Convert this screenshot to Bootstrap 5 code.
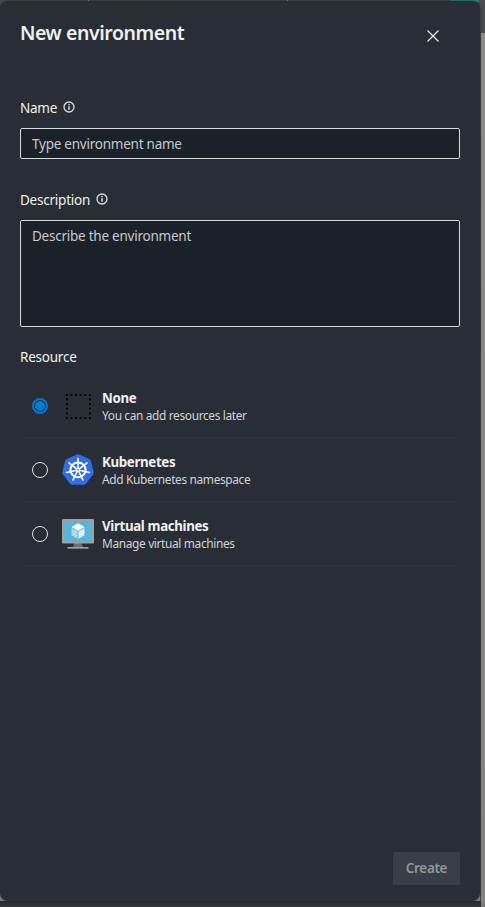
<!DOCTYPE html>
<html lang="en">
<head>
<meta charset="utf-8">
<meta name="viewport" content="width=device-width, initial-scale=1">
<title>New environment</title>
<link href="https://cdn.jsdelivr.net/npm/bootstrap@5.3.0/dist/css/bootstrap.min.css" rel="stylesheet">
<style>
body{font-family:"Segoe UI","Noto Sans",sans-serif;font-size:13.5px;line-height:20px;letter-spacing:-.23px;color:#f0f0f0;height:907px;overflow:hidden;
background:linear-gradient(90deg,transparent 88px,#888b8d 88px,#888b8d 89px,transparent 89px,transparent 287px,#888b8d 287px,#888b8d 288px,transparent 288px,transparent 450px,#2b8276 450px,#2b8276 479px,transparent 479px) 0 0/100% 2px no-repeat,linear-gradient(#484b50 33px,#8d8c8d 33px,#858484 901px,#777 907px)}
.backdrop-foot{height:6px;width:481px;background:linear-gradient(#242527,#37383a)}
.stage{width:481px;padding-top:1px;height:901px;background:linear-gradient(#484b50,#484b50) 480px 0/1px 100% no-repeat}
.panel{width:480px;height:900px;background:#292d35;border-radius:8px;padding:0 20px;box-shadow:0 0 3px rgba(0,0,0,.55)}
.panel-head{height:97px;padding:16px 18px 0 0}
h1{font-size:19.5px;line-height:32px;font-weight:600;letter-spacing:-.44px}
.close-x{width:18px;height:18px;margin-top:10px;line-height:0}
.field-label{height:20px;gap:6px}
.field-label svg{margin-top:-2px}
.form-control,.form-control:focus{font-size:13.5px;line-height:20px;letter-spacing:-.24px;background:#1a2129;border:1px solid #d8d9da;border-radius:2px;color:#eee;padding:4.5px 11px;resize:none}
.form-control::placeholder{color:#c8c9cb;opacity:1}
.name-input{height:31px;margin:10px 0 31px}
.desc-input{height:107px;margin:10px 0 20px}
.options{height:485px;padding-top:7px}
.option{height:64px;padding-left:12px;border-bottom:1px solid #30333a}
.option input{appearance:none;width:16px;height:16px;border:1px solid #e0e0e0;border-radius:50%;margin:0 14px 0 0}
.option input:checked{border:2px solid #0078d4;background:radial-gradient(circle,#0078d4 4.7px,transparent 5.2px)}
.option svg{margin-right:8px}
.option span{padding-top:2px}
.option strong{display:block;font-size:13.3px;line-height:18px;font-weight:700;letter-spacing:-.35px}
.option small{display:block;font-size:11.9px;line-height:17px;letter-spacing:-.35px;color:#d2d3d4}
.create,.create:disabled{width:67px;height:33px;background:#3a3e46;border:0;border-radius:2px;color:#93969a;font-size:13.5px;font-weight:600;letter-spacing:-.35px;opacity:1;padding:0}
</style>
</head>
<body>
<div class="stage">
<main class="panel">
<header class="panel-head d-flex justify-content-between">
<h1 class="mb-0">New environment</h1>
<button class="close-x btn p-0 border-0" aria-label="Close"><svg width="18" height="18" viewBox="0 0 18 18"><path d="M3.5 3.5l11 11m0-11l-11 11" stroke="#e8e8e8" stroke-width="1.3"/></svg></button>
</header>
<div class="field-label d-flex align-items-center"><label for="name">Name</label><svg width="12" height="12" viewBox="0 0 12 12"><circle cx="6" cy="6" r="5" fill="none" stroke="#ddd" stroke-width="1.3"/><path d="M6 5.2v3.5M6 3v1.2" stroke="#eee" stroke-width="1.4"/></svg></div>
<input id="name" class="form-control name-input" placeholder="Type environment name">
<div class="field-label d-flex align-items-center"><label for="desc">Description</label><svg width="12" height="12" viewBox="0 0 12 12"><circle cx="6" cy="6" r="5" fill="none" stroke="#ddd" stroke-width="1.3"/><path d="M6 5.2v3.5M6 3v1.2" stroke="#eee" stroke-width="1.4"/></svg></div>
<textarea id="desc" class="form-control desc-input" placeholder="Describe the environment"></textarea>
<div>Resource</div>
<div class="options">
<label class="option d-flex align-items-center"><input type="radio" name="resource" checked>
<svg width="32" height="32" viewBox="0 0 32 32"><path d="M4 5h25M4 28h25M5 8.6v18M28 8.6v18" stroke="#000" stroke-width="2" stroke-dasharray="1.8 2.8"/></svg>
<span><strong>None</strong><small>You can add resources later</small></span></label>
<label class="option d-flex align-items-center"><input type="radio" name="resource">
<svg width="32" height="32" viewBox="0.8 0.5 30.4 31.2" preserveAspectRatio="none"><path d="M14.8 1q1.2-.6 2.4 0l9.800 4.700q1 .6 1.300 1.800l2.600 10.700q.2 1.200-.5 2.200l-6.900 9.200q-.8 1-2 1h-11q-1.200 0-2-1l-6.900-9.200q-.7-1-.5-2.200l2.600-10.700q.3-1.200 1.300-1.800z" fill="#326de6"/><g fill="none" stroke="#fff" stroke-width="1.5" stroke-linecap="round"><circle cx="16" cy="16" r="7.2" stroke-width="1.9"/><path d="M16 5v11" id="s"/><use href="#s" transform="rotate(51.43 16 16)"/><use href="#s" transform="rotate(102.86 16 16)"/><use href="#s" transform="rotate(154.29 16 16)"/><use href="#s" transform="rotate(205.71 16 16)"/><use href="#s" transform="rotate(257.14 16 16)"/><use href="#s" transform="rotate(308.57 16 16)"/></g><circle cx="16" cy="16" r="2" fill="#fff"/><circle cx="16" cy="16" r=".8" fill="#326de6"/></svg>
<span><strong>Kubernetes</strong><small>Add Kubernetes namespace</small></span></label>
<label class="option d-flex align-items-center"><input type="radio" name="resource">
<svg width="32" height="32" viewBox="0 0 32 32"><path d="M12 25h8c0 3 .5 4 3 4.500H9c2.500-.5 3-1.500 3-4.500z" fill="#707070"/><path d="M5.500 29h21v1.700h-21z" fill="#a0a0a0"/><rect y="1" width="32" height="24.500" rx="1.200" fill="#a0a0a0"/><path d="M2.200 3.200h27.600v20H2.200z" fill="#59b4d9"/><path d="M16 5.200l6.500 3.900-6.500 3.900-6.500-3.900z" fill="#fff"/><path d="M9.500 9.900l6 3.600v7.300l-6-3.600z" fill="#acd9ec"/><path d="M22.500 9.900l-6 3.600v7.300l6-3.600z" fill="#dceff7"/></svg>
<span><strong>Virtual machines</strong><small>Manage virtual machines</small></span></label>
</div>
<div class="d-flex justify-content-end"><button class="create btn" disabled>Create</button></div>
</main>
</div>
<div class="backdrop-foot"></div>
<script src="https://cdn.jsdelivr.net/npm/bootstrap@5.3.0/dist/js/bootstrap.bundle.min.js"></script>
</body>
</html>
